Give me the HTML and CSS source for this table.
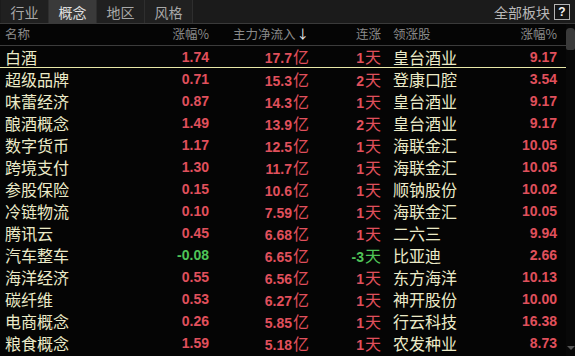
FILE: index.html
```html
<!DOCTYPE html>
<html lang="zh">
<head>
<meta charset="utf-8">
<link rel="stylesheet" href="styles.css">
</head>
<body>
<div class="panel">
  <div class="tabbar">
    <div class="tab">行业</div>
    <div class="tab active">概念</div>
    <div class="tab">地区</div>
    <div class="tab">风格</div>
    <div class="spacer"></div>
    <div class="all">全部板块</div>
    <div class="helpwrap"><span class="help">?</span></div>
  </div>
  <div class="body">
    <div class="table">
      <div class="row head">
        <div class="c name">名称</div>
        <div class="c r">涨幅%</div>
        <div class="c r">主力净流入<span class="arrow">↓</span></div>
        <div class="c r">连涨</div>
        <div class="c lead">领涨股</div>
        <div class="c r">涨幅%</div>
      </div>
      <div class="rows">
        <div class="row sel"><div class="c name">白酒</div><div class="c r num red">1.74</div><div class="c r num red">17.7<span class="cn">亿</span></div><div class="c r num red">1<span class="cn">天</span></div><div class="c lead">皇台酒业</div><div class="c r num red">9.17</div></div>
        <div class="row"><div class="c name">超级品牌</div><div class="c r num red">0.71</div><div class="c r num red">15.3<span class="cn">亿</span></div><div class="c r num red">2<span class="cn">天</span></div><div class="c lead">登康口腔</div><div class="c r num red">3.54</div></div>
        <div class="row"><div class="c name">味蕾经济</div><div class="c r num red">0.87</div><div class="c r num red">14.3<span class="cn">亿</span></div><div class="c r num red">1<span class="cn">天</span></div><div class="c lead">皇台酒业</div><div class="c r num red">9.17</div></div>
        <div class="row"><div class="c name">酿酒概念</div><div class="c r num red">1.49</div><div class="c r num red">13.9<span class="cn">亿</span></div><div class="c r num red">2<span class="cn">天</span></div><div class="c lead">皇台酒业</div><div class="c r num red">9.17</div></div>
        <div class="row"><div class="c name">数字货币</div><div class="c r num red">1.17</div><div class="c r num red">12.5<span class="cn">亿</span></div><div class="c r num red">1<span class="cn">天</span></div><div class="c lead">海联金汇</div><div class="c r num red">10.05</div></div>
        <div class="row"><div class="c name">跨境支付</div><div class="c r num red">1.30</div><div class="c r num red">11.7<span class="cn">亿</span></div><div class="c r num red">1<span class="cn">天</span></div><div class="c lead">海联金汇</div><div class="c r num red">10.05</div></div>
        <div class="row"><div class="c name">参股保险</div><div class="c r num red">0.15</div><div class="c r num red">10.6<span class="cn">亿</span></div><div class="c r num red">1<span class="cn">天</span></div><div class="c lead">顺钠股份</div><div class="c r num red">10.02</div></div>
        <div class="row"><div class="c name">冷链物流</div><div class="c r num red">0.10</div><div class="c r num red">7.59<span class="cn">亿</span></div><div class="c r num red">1<span class="cn">天</span></div><div class="c lead">海联金汇</div><div class="c r num red">10.05</div></div>
        <div class="row"><div class="c name">腾讯云</div><div class="c r num red">0.45</div><div class="c r num red">6.68<span class="cn">亿</span></div><div class="c r num red">1<span class="cn">天</span></div><div class="c lead">二六三</div><div class="c r num red">9.94</div></div>
        <div class="row"><div class="c name">汽车整车</div><div class="c r num green">-0.08</div><div class="c r num red">6.65<span class="cn">亿</span></div><div class="c r num green">-3<span class="cn">天</span></div><div class="c lead">比亚迪</div><div class="c r num red">2.66</div></div>
        <div class="row"><div class="c name">海洋经济</div><div class="c r num red">0.55</div><div class="c r num red">6.56<span class="cn">亿</span></div><div class="c r num red">1<span class="cn">天</span></div><div class="c lead">东方海洋</div><div class="c r num red">10.13</div></div>
        <div class="row"><div class="c name">碳纤维</div><div class="c r num red">0.53</div><div class="c r num red">6.27<span class="cn">亿</span></div><div class="c r num red">1<span class="cn">天</span></div><div class="c lead">神开股份</div><div class="c r num red">10.00</div></div>
        <div class="row"><div class="c name">电商概念</div><div class="c r num red">0.26</div><div class="c r num red">5.85<span class="cn">亿</span></div><div class="c r num red">1<span class="cn">天</span></div><div class="c lead">行云科技</div><div class="c r num red">16.38</div></div>
        <div class="row"><div class="c name">粮食概念</div><div class="c r num red">1.59</div><div class="c r num red">5.18<span class="cn">亿</span></div><div class="c r num red">1<span class="cn">天</span></div><div class="c lead">农发种业</div><div class="c r num red">8.73</div></div>
      </div>
    </div>
    <div class="scroll">
      <div class="thumb"></div>
      <div class="track"></div>
      <div class="down"></div>
    </div>
  </div>
</div>
</body>
</html>
```
FILE: styles.css
```css
html, body {
  margin: 0;
  padding: 0;
  background: #000;
}
.panel {
  width: 575px;
  height: 356px;
  background: #050505;
  font-family: "Noto Sans CJK SC", "Liberation Sans", sans-serif;
  overflow: hidden;
  display: flex;
  flex-direction: column;
}
.tabbar {
  height: 23px;
  display: flex;
  align-items: stretch;
  background: #1b1b1b;
  border-bottom: 1px solid #3a3a3a;
}
.tab {
  width: 47px;
  border-right: 1px solid #2e2e2e;
  background: #202020;
  color: #a8a8a8;
  font-size: 14px;
  display: flex;
  align-items: center;
  justify-content: center;
  line-height: 1;
}
.tab:first-child { margin-left: 1px; }
.tab.active {
  background: #3a3a3a;
  color: #e0e0e0;
}
.spacer { flex: 1 1 auto; }
.all {
  flex: none;
  color: #b8b8b8;
  font-size: 14px;
  display: flex;
  align-items: center;
  margin-right: 4px;
}
.helpwrap {
  flex: none;
  width: 21px;
  display: flex;
  align-items: center;
}
.help {
  display: block;
  box-sizing: border-box;
  width: 16px;
  height: 16px;
  border: 1px solid #b4b4b4;
  background: #141414;
  color: #f0f0f0;
  font-family: "Liberation Sans", sans-serif;
  font-size: 12px;
  font-weight: bold;
  line-height: 14px;
  text-align: center;
}
.body {
  flex: 1;
  display: flex;
}
.table {
  width: 566px;
  display: flex;
  flex-direction: column;
}
.row {
  display: grid;
  grid-template-columns: 145px 64px 100px 72px 100px 76px;
  height: 22px;
  align-items: center;
}
.row.head {
  height: 21px;
  border-bottom: 1px solid #3c3c3c;
}
.row.head .c {
  color: #8a8a8a;
  font-size: 12.5px;
}
.row.sel {
  border-bottom: 1px solid #e8e8a8;
  height: 21px;
}
.c {
  white-space: nowrap;
  line-height: 1;
}
.name {
  padding-left: 5px;
  color: #ecebc8;
  font-size: 16px;
}
.lead {
  padding-left: 12px;
  color: #ecebc8;
  font-size: 16px;
}
.r { text-align: right; }
.num {
  font-family: "Liberation Sans", sans-serif;
  font-weight: bold;
  font-size: 14px;
}
.red { color: #e0505c; }
.green { color: #4fc457; }
.cn {
  font-family: "Noto Sans CJK SC", sans-serif;
  font-weight: normal;
  font-size: 16px;
  margin-left: 1px;
}
.arrow {
  color: #eee;
  margin-left: 1px;
}
.scroll {
  width: 9px;
  display: flex;
  flex-direction: column;
  background: #080808;
}
.thumb {
  margin-top: 4px;
  height: 22px;
  background: #3a3a3a;
  border-radius: 4px 4px 2px 2px;
}
.track { flex: 1; }
.down {
  height: 0;
  width: 0;
  margin: 0 0 6px 1px;
  border-left: 4px solid transparent;
  border-right: 4px solid transparent;
  border-top: 4px solid #555;
}
```
